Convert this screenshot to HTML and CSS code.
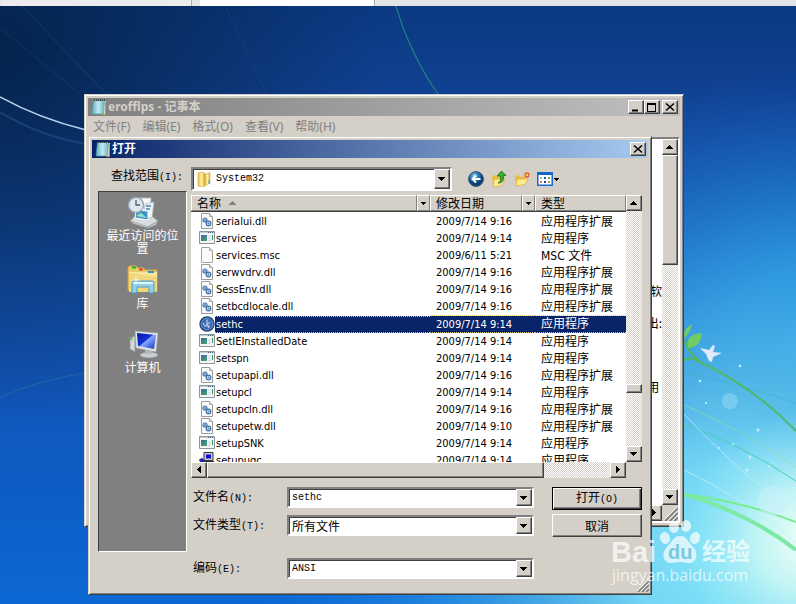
FILE: index.html
```html
<!DOCTYPE html>
<html lang="zh-CN">
<head>
<meta charset="utf-8">
<title>erofflps - 记事本</title>
<link rel="stylesheet" href="styles.css">
</head>
<body>
<svg class="sprites" aria-hidden="true">
  <defs>
    <linearGradient id="pageBlue" x1="0" x2="1"><stop offset="0" stop-color="#58aebe"/><stop offset=".5" stop-color="#c4ebf0"/><stop offset="1" stop-color="#69b7c7"/></linearGradient>
    <linearGradient id="folderY" x1="0" x2="1"><stop offset="0" stop-color="#e5bd48"/><stop offset=".5" stop-color="#fff0a5"/><stop offset="1" stop-color="#d9ac35"/></linearGradient>
    <radialGradient id="ball" cx=".4" cy=".3"><stop offset="0" stop-color="#a8d8ef"/><stop offset=".5" stop-color="#2d7fb8"/><stop offset="1" stop-color="#123f78"/></radialGradient>
    <linearGradient id="screen" x1="0" y1="0" x2="1" y2="1"><stop offset="0" stop-color="#0818a8"/><stop offset=".45" stop-color="#1032d8"/><stop offset=".5" stop-color="#88a8ff"/><stop offset="1" stop-color="#1030c0"/></linearGradient>
    <linearGradient id="exeG" x1="0" y1="0" x2="1" y2="1"><stop offset="0" stop-color="#3c62a8"/><stop offset="1" stop-color="#48a868"/></linearGradient>
  </defs>
  <symbol id="i-note" viewBox="0 0 16 16"><path d="M3 2h12l-1 14H13z" fill="#f5eed8"/><path d="M2.500 1.500h11L12.500 15H1z" fill="url(#pageBlue)" stroke="#4b98aa" stroke-width=".6"/><path d="M3 1.200h11" stroke="#263a42" stroke-width="1.600" stroke-dasharray="1 1"/><path d="M14.300 3v12.500H11" stroke="#b79b52" fill="none"/></symbol>
  <symbol id="i-dll" viewBox="0 0 16 16"><path d="M2.500.5h8l3 3v12h-11z" fill="#fbfbfb" stroke="#9a9a9a"/><path d="M10.500.5v3h3" fill="#ddd" stroke="#9a9a9a" stroke-width=".8"/><g fill="#e6f0fa" stroke="#3a6ea5"><circle cx="6" cy="7" r="2" stroke-width="1.100"/><circle cx="9.500" cy="10.500" r="2.300" stroke-width="1.200"/><circle cx="6" cy="7" r=".5"/><circle cx="9.500" cy="10.500" r=".6"/></g></symbol>
  <symbol id="i-exe" viewBox="0 0 16 16"><path d="M.5 1.500h15v12H.5z" fill="#f4f6f8" stroke="#8c949c"/><path d="M1 2.500h14" stroke="#c3ccd6"/><path d="M9 2.500h5" stroke="#4a6484" stroke-dasharray="1 1"/><path d="M2 5h6v6H2z" fill="url(#exeG)"/><path d="M9.500 6.500h2M9.500 8.500h2M9.500 10.500h2" stroke="#b8c0c8" stroke-width=".8"/><path d="M13.500 5v5" stroke="#2c9a78"/></symbol>
  <symbol id="i-file" viewBox="0 0 16 16"><path d="M2.500.5h8l3 3v12h-11z" fill="#fafafa" stroke="#a2a2a2"/><path d="M10.500.5v3h3" fill="#ddd" stroke="#a2a2a2" stroke-width=".8"/></symbol>
  <symbol id="i-sethc" viewBox="0 0 16 16"><circle cx="8" cy="8" r="7.700" fill="#1d3f7c"/><circle cx="8" cy="8" r="6" fill="#3f6bb0" stroke="#7e9bcc" stroke-width=".8"/><path d="M8 3.500V8l3-1.500M4 7l2 3h5M8 8l2 4" stroke="#c2d4f0" fill="none" stroke-width="1.100"/></symbol>
  <symbol id="i-setup" viewBox="0 0 16 16"><path d="M5 .5h9v8H5z" fill="#ccc" stroke="#333"/><path d="M7 2.500h5v4H7z" fill="#0a0adf"/><path d="M3 9.500h12v5H3z" fill="#bbb" stroke="#333"/><path d="M0 8l3-2 3 3-3 3z" fill="#2222c0" stroke="#333" stroke-width=".5"/></symbol>
  <symbol id="i-folder" viewBox="0 0 16 16"><path d="M1 2l5-1 2 2v12l-5 1-2-1z" fill="url(#folderY)" stroke="#c89c36" stroke-width=".5"/><path d="M8 3l5-1.500V12l-4 2.500-1-.5z" fill="url(#folderY)" stroke="#c89c36" stroke-width=".5"/><path d="M11.500 9.500h1.500V13h-1.500z" fill="#55a6dd"/></symbol>
  <symbol id="i-back" viewBox="0 0 16 16"><circle cx="8" cy="8" r="7.500" fill="url(#ball)" stroke="#34506c" stroke-width=".8"/><path d="M12.500 8H5M8 4.500L4.500 8 8 11.500" stroke="#fff" stroke-width="1.900" fill="none"/></symbol>
  <symbol id="i-up" viewBox="0 0 16 16"><path d="M1 5l4-1 1 1.500h5V14l-9 2z" fill="#e9bf45"/><path d="M3 8h11l-3 6.500-9 1.500z" fill="#ffe98e" stroke="#cc9c2d" stroke-width=".5"/><path d="M7 12c3-1 3-4 2-7H6l4.500-5L15 4.500h-2.500C13 9 12 12 7 12z" fill="#36ae2c" stroke="#17721b" stroke-width=".8"/></symbol>
  <symbol id="i-new" viewBox="0 0 16 16"><path d="M1 5l4-1 1 1.500h5V13l-9 2z" fill="#e9bf45"/><path d="M3 8h11l-3 5.500-9 1.500z" fill="#ffe98e" stroke="#cc9c2d" stroke-width=".5"/><path d="M13 1v6M10 4h6M11 2l4 4M15 2l-4 4" stroke="#ea4b22" stroke-width="1.200"/><circle cx="13" cy="4" r="1.300" fill="#ffd24a"/></symbol>
  <symbol id="i-view" viewBox="0 0 16 16"><path d="M.8 1.800h14.400v12.500H.8z" fill="#fff" stroke="#1767c9" stroke-width="1.500"/><path d="M0 1h16v3H0z" fill="#1767c9"/><path d="M3 6h2v2H3z" fill="#a8b4cc"/><path d="M7 6h2v2H7z" fill="#3060a0"/><path d="M11 6h2v2h-2z" fill="#58b058"/><path d="M3 10h2v2H3z" fill="#e86a4a"/><path d="M7 10h2v2H7z" fill="#2040a0"/><path d="M11 10h2v2h-2z" fill="#c09a20"/></symbol>
  <symbol id="a-down" viewBox="0 0 8 8"><path d="M0 2h7v1H0zM1 3h5v1H1zM2 4h3v1H2zM3 5h1v1H3z"/></symbol>
  <symbol id="a-up" viewBox="0 0 8 8"><path d="M3 2h1v1H3zM2 3h3v1H2zM1 4h5v1H1zM0 5h7v1H0z"/></symbol>
  <symbol id="a-small" viewBox="0 0 8 8"><path d="M1 3h5v1H1zM2 4h3v1H2zM3 5h1v1H3z"/></symbol>
  <symbol id="a-left" viewBox="0 0 8 8"><path d="M2 3h1v1H2zM3 2h1v3H3zM4 1h1v5H4zM5 0h1v7H5z"/></symbol>
  <symbol id="a-right" viewBox="0 0 8 8"><path d="M5 3h1v1H5zM4 2h1v3H4zM3 1h1v5H3zM2 0h1v7H2z"/></symbol>
  <symbol id="a-close" viewBox="0 0 10 8"><path d="M1 0l8 7M9 0L1 7" stroke="#000" stroke-width="1.500"/></symbol>
  <symbol id="a-min" viewBox="0 0 10 8"><path d="M1 6h6v2H1z"/></symbol>
  <symbol id="a-max" viewBox="0 0 10 9"><path d="M0 0h9v9H0zM1 2v6h7V2z" fill-rule="evenodd"/></symbol>
  <symbol id="a-grip" viewBox="0 0 12 12"><path d="M1 12L12 1M5 12l7-7M9 12l3-3" stroke="#808080" stroke-width="1.600"/><path d="M0 11L11 0M4 11l8-8M8 11l4-4" stroke="#fff" stroke-width=".8"/></symbol>
</svg>

<svg class="wallpaper" viewBox="0 0 796 604" preserveAspectRatio="none" aria-hidden="true">
  <defs>
    <linearGradient id="sky" x1="0" y1="0" x2="0" y2="1"><stop offset="0" stop-color="#0a3880"/><stop offset=".2" stop-color="#134396"/><stop offset=".45" stop-color="#1550ae"/><stop offset=".8" stop-color="#0e5cc4"/><stop offset="1" stop-color="#0c68d4"/></linearGradient>
    <radialGradient id="dark" gradientUnits="userSpaceOnUse" cx="0" cy="50" r="380"><stop offset="0" stop-color="#04244c"/><stop offset="1" stop-color="#04244c" stop-opacity="0"/></radialGradient>
    <radialGradient id="azure" gradientUnits="userSpaceOnUse" cx="840" cy="390" r="330"><stop offset="0" stop-color="#3cb8e6"/><stop offset=".4" stop-color="#2698dc" stop-opacity=".8"/><stop offset="1" stop-color="#0a50b8" stop-opacity="0"/></radialGradient>
    <radialGradient id="cyan" gradientUnits="userSpaceOnUse" cx="730" cy="560" r="480"><stop offset="0" stop-color="#82e4f8"/><stop offset=".2" stop-color="#74d6f4"/><stop offset=".38" stop-color="#58bcea" stop-opacity=".8"/><stop offset=".6" stop-color="#3ca8ec" stop-opacity=".5"/><stop offset="1" stop-color="#1478dc" stop-opacity="0"/></radialGradient>
    <radialGradient id="glow" gradientUnits="userSpaceOnUse" cx="810" cy="540" r="130"><stop offset="0" stop-color="#f4fff8"/><stop offset=".4" stop-color="#d4fbf4" stop-opacity=".8"/><stop offset="1" stop-color="#a0ecf8" stop-opacity="0"/></radialGradient>
  </defs>
  <path fill="url(#sky)" d="M0 0h796v604H0z"/>
  <path fill="url(#dark)" d="M0 0h796v604H0z"/>
  <path fill="url(#azure)" d="M0 0h796v604H0z"/>
  <path fill="url(#cyan)" d="M0 0h796v604H0z"/>
  <path fill="url(#glow)" d="M0 0h796v604H0z"/>
  <g fill="none">
    <path d="M0 97q40 22 86 33" stroke="#b9d2ee" stroke-width="1.500"/>
    <path d="M0 112q40 24 86 32" stroke="#2a5798" stroke-width="2" opacity=".5"/>
    <path d="M22 6l84 88" stroke="#1c5060" opacity=".6"/>
    <path d="M0 28l80 66M225 6l42 88" stroke="#2a5a98" opacity=".3"/>
    <path d="M396 6q14 48 42 88" stroke="#1f8080" stroke-width="1.200"/>
    <path d="M0 397q42-18 86-24" stroke="#287098" opacity=".7"/>
    <path d="M684 373q60 12 112 30" stroke="#38b0c0" opacity=".6"/>
    <path d="M684 405q60 26 112 62" stroke="#9adca0" opacity=".6"/>
    <path d="M684 424q60 22 112 57" stroke="#4ad0b4"/>
    <path d="M684 414q60 64 112 98M684 470q60 28 112 72" stroke="#c4eefa" opacity=".7"/>
    <path d="M684 494q60 8 112 28" stroke="#7aee8c" stroke-width="2"/>
    <path d="M684 494q66 20 112 56" stroke="#7ee8a6" stroke-width="4"/>
    <path d="M684 340q4 12 16 22M684 360q9-4 14 2" stroke="#53b651" stroke-width="2"/>
    <path d="M698 361q56 26 98 70" stroke="#4fb96c" stroke-width="2"/>
  </g>
  <path d="M688 348q-3-14 14-15-1 14-14 15zM684 334q1-6 8-10-2 10-8 14z" fill="#70cc62"/>
  <path d="M700 348l9 2 4-5 2 1-2 6 9 1-9 4-1 5-3-1-3-7z" fill="#e4e9fb"/>
  <g fill="#c8f0fc">
    <circle cx="773" cy="501" r="15" opacity=".55"/><circle cx="730" cy="401" r="8" opacity=".3"/><circle cx="700" cy="381" r="1.300"/><circle cx="740" cy="366" r="1.300"/><circle cx="758" cy="430" r="1.500"/><circle cx="750" cy="457" r="1.500"/><circle cx="747" cy="470" r="1.500"/><circle cx="706" cy="403" r="1"/><circle cx="719" cy="448" r="1"/><circle cx="733" cy="444" r="1"/><circle cx="769" cy="466" r="1"/>
  </g>
</svg>

<div class="tabstrip"><span class="tab"></span><span class="tab tab-active"></span></div>

<section class="window notepad" aria-label="记事本">
  <header class="titlebar inactive">
    <svg class="ico"><use href="#i-note"/></svg>
    <h1>erofflps - 记事本</h1>
    <button class="cap" aria-label="最小化"><svg><use href="#a-min"/></svg></button>
    <button class="cap" aria-label="最大化"><svg><use href="#a-max"/></svg></button>
    <button class="cap cap-close" aria-label="关闭"><svg><use href="#a-close"/></svg></button>
  </header>
  <nav class="menu"><button>文件(F)</button><button>编辑(E)</button><button>格式(O)</button><button>查看(V)</button><button>帮助(H)</button></nav>
  <div class="editor">
    <textarea aria-label="文本" readonly>









软

出:



用&#160;</textarea>
    <div class="vbar"><button class="sb" aria-label="向上"><svg><use href="#a-up"/></svg></button><i class="thumb"></i><button class="sb end" aria-label="向下"><svg><use href="#a-down"/></svg></button></div>
    <div class="hbar"><button class="sb end" aria-label="向右"><svg><use href="#a-right"/></svg></button></div>
    <svg class="grip"><use href="#a-grip"/></svg>
  </div>
</section>

<section class="window dialog" aria-label="打开">
  <header class="titlebar">
    <svg class="ico"><use href="#i-note"/></svg>
    <h2>打开</h2>
    <button class="cap cap-close" aria-label="关闭"><svg><use href="#a-close"/></svg></button>
  </header>
  <div class="lookin">
    <label for="look">查找范围<span class="lat">(I):</span></label>
    <div class="combo tall"><svg class="ico"><use href="#i-folder"/></svg><select id="look" class="lat"><option>System32</option></select><span class="sb drop"><svg><use href="#a-down"/></svg></span></div>
    <div class="tools">
      <button aria-label="后退"><svg class="ico"><use href="#i-back"/></svg></button>
      <button aria-label="向上一级"><svg class="ico"><use href="#i-up"/></svg></button>
      <button aria-label="新建文件夹"><svg class="ico"><use href="#i-new"/></svg></button>
      <button aria-label="查看"><svg class="ico"><use href="#i-view"/></svg><svg class="arr"><use href="#a-small"/></svg></button>
    </div>
  </div>
  <div class="content">
    <nav class="places">
      <a href="#recent"><svg viewBox="0 0 32 32"><path d="M3 25l5-5h17l6 5-10 6z" fill="#d8dcde" stroke="#8d9396"/><path d="M11 2h13l-1 19H11z" fill="#f6f8fa" stroke="#bbb"/><path d="M18 8l9-2-2 16-9-1z" fill="#eef2f6" stroke="#b5b5b5" stroke-width=".7"/><path d="M19 10h5M19 13h4" stroke="#3a8ac0" stroke-width="1.500"/><path d="M9 14l12 1v9l-13-2z" fill="#3a94cc" stroke="#fff"/><path d="M9 20l5-3 6 5z" fill="#9fe0c0"/><circle cx="9" cy="9" r="7.500" fill="#dde8f0" stroke="#9aa9b4" stroke-width="1.500"/><path d="M9 4v5h4" stroke="#48607a" stroke-width="1.300" fill="none"/><path d="M3 25l9 2 9 4 10-6-2 4-8 3-14-4z" fill="#b9bec0"/></svg><span>最近访问的位置</span></a>
      <a href="#lib"><svg viewBox="0 0 32 32"><path d="M1 4q0-2 2-2h6l2 2h6l1 2h12v20H1z" fill="#e6c968" stroke="#c9a443"/><path d="M2 8h28v20H2z" fill="#fbe596"/><path d="M2 9l28 4v15H2z" fill="#f2d678"/><path d="M5 2.500h4v2H5z" fill="#16b628"/><path d="M12 4.500h4v2h-4z" fill="#e0402c"/><path d="M21 7h6v2h-6z" fill="#3190d4"/><path d="M5 29V19q0-2 2-2h18q2 0 2 2v10h-5v-6H10v6z" fill="#8fd0ea" stroke="#4a9cc4"/><path d="M6 19h20" stroke="#dff6ff" stroke-width="2"/><path d="M9 12v8M5 16h8" stroke="#fff" stroke-width=".8"/></svg><span>库</span></a>
      <a href="#computer"><svg viewBox="0 0 32 32"><path d="M3 10l5-2v16l-5-3z" fill="#d4d8dc" stroke="#8b9096" stroke-width=".7"/><circle cx="4.500" cy="11" r="1.200" fill="#3fdc24"/><ellipse cx="22" cy="27" rx="9" ry="3" fill="#c9cdd0" stroke="#8f9498" stroke-width=".7"/><path d="M18 21h7v5h-7z" fill="#b4b9bd"/><path d="M8 3l23 2-2 19L9 20z" fill="#dfe3e6" stroke="#9a9fa4" stroke-width=".6"/><path d="M10 5l19 2-2 14-16-3z" fill="url(#screen)"/></svg><span>计算机</span></a>
    </nav>
    <main>
      <div class="list">
        <div class="rows">
          <table>
            <colgroup><col class="c-name"><col class="c-date"><col class="c-type"></colgroup>
            <thead><tr>
              <th><div class="th"><span>名称<svg class="arr sort"><use href="#a-up"/></svg></span><button aria-label="筛选名称"><svg class="arr"><use href="#a-small"/></svg></button></div></th>
              <th><div class="th"><span>修改日期</span><button aria-label="筛选日期"><svg class="arr"><use href="#a-small"/></svg></button></div></th>
              <th><div class="th"><span>类型</span></div></th>
            </tr></thead>
            <tbody>
              <tr><td><div class="nm"><svg class="ico"><use href="#i-dll"/></svg><span>serialui.dll</span></div></td><td>2009/7/14 9:16</td><td>应用程序扩展</td></tr>
              <tr><td><div class="nm"><svg class="ico"><use href="#i-exe"/></svg><span>services</span></div></td><td>2009/7/14 9:14</td><td>应用程序</td></tr>
              <tr><td><div class="nm"><svg class="ico"><use href="#i-file"/></svg><span>services.msc</span></div></td><td>2009/6/11 5:21</td><td>MSC 文件</td></tr>
              <tr><td><div class="nm"><svg class="ico"><use href="#i-dll"/></svg><span>serwvdrv.dll</span></div></td><td>2009/7/14 9:16</td><td>应用程序扩展</td></tr>
              <tr><td><div class="nm"><svg class="ico"><use href="#i-dll"/></svg><span>SessEnv.dll</span></div></td><td>2009/7/14 9:16</td><td>应用程序扩展</td></tr>
              <tr><td><div class="nm"><svg class="ico"><use href="#i-dll"/></svg><span>setbcdlocale.dll</span></div></td><td>2009/7/14 9:16</td><td>应用程序扩展</td></tr>
              <tr class="sel"><td><div class="nm"><svg class="ico"><use href="#i-sethc"/></svg><span>sethc</span></div></td><td>2009/7/14 9:14</td><td>应用程序</td></tr>
              <tr><td><div class="nm"><svg class="ico"><use href="#i-exe"/></svg><span>SetIEInstalledDate</span></div></td><td>2009/7/14 9:14</td><td>应用程序</td></tr>
              <tr><td><div class="nm"><svg class="ico"><use href="#i-exe"/></svg><span>setspn</span></div></td><td>2009/7/14 9:14</td><td>应用程序</td></tr>
              <tr><td><div class="nm"><svg class="ico"><use href="#i-dll"/></svg><span>setupapi.dll</span></div></td><td>2009/7/14 9:16</td><td>应用程序扩展</td></tr>
              <tr><td><div class="nm"><svg class="ico"><use href="#i-exe"/></svg><span>setupcl</span></div></td><td>2009/7/14 9:14</td><td>应用程序</td></tr>
              <tr><td><div class="nm"><svg class="ico"><use href="#i-dll"/></svg><span>setupcln.dll</span></div></td><td>2009/7/14 9:16</td><td>应用程序扩展</td></tr>
              <tr><td><div class="nm"><svg class="ico"><use href="#i-dll"/></svg><span>setupetw.dll</span></div></td><td>2009/7/14 9:10</td><td>应用程序扩展</td></tr>
              <tr><td><div class="nm"><svg class="ico"><use href="#i-exe"/></svg><span>setupSNK</span></div></td><td>2009/7/14 9:14</td><td>应用程序</td></tr>
              <tr><td><div class="nm"><svg class="ico"><use href="#i-setup"/></svg><span>setupugc</span></div></td><td>2009/7/14 9:14</td><td>应用程序</td></tr>
            </tbody>
          </table>
        </div>
        <div class="vbar"><button class="sb" aria-label="向上"><svg><use href="#a-up"/></svg></button><i class="thumb"></i><button class="sb end" aria-label="向下"><svg><use href="#a-down"/></svg></button></div>
        <div class="hbar"><button class="sb" aria-label="向左"><svg><use href="#a-left"/></svg></button><i class="thumb"></i><button class="sb end" aria-label="向右"><svg><use href="#a-right"/></svg></button></div>
      </div>
      <form class="form">
        <div class="fields">
          <label for="fname">文件名<span class="lat">(N):</span></label>
          <div class="combo"><input id="fname" class="lat" value="sethc"><button type="button" class="sb drop" aria-label="展开"><svg><use href="#a-down"/></svg></button></div>
          <label for="ftype">文件类型<span class="lat">(T):</span></label>
          <div class="combo"><select id="ftype"><option>所有文件</option></select><span class="sb drop"><svg><use href="#a-down"/></svg></span></div>
          <label for="enc" class="apart">编码<span class="lat">(E):</span></label>
          <div class="combo apart"><select id="enc" class="lat"><option>ANSI</option></select><span class="sb drop"><svg><use href="#a-down"/></svg></span></div>
        </div>
        <div class="actions">
          <button type="button" class="btn default">打开<span class="lat">(O)</span></button>
          <button type="button" class="btn">取消</button>
        </div>
      </form>
    </main>
  </div>
  <svg class="grip"><use href="#a-grip"/></svg>
</section>

<svg class="watermark" viewBox="0 0 150 72" role="img" aria-label="Baidu 经验">
  <g class="wm">
    <text x="1" y="44" class="wm-b">Bai</text>
    <ellipse cx="55" cy="20" rx="5" ry="6" transform="rotate(-15 55 20)"/><ellipse cx="64" cy="9" rx="5" ry="6"/><ellipse cx="76" cy="8" rx="5" ry="6"/><ellipse cx="85" cy="20" rx="5" ry="6" transform="rotate(20 85 20)"/>
    <path d="M70 18c7 0 8 6 13 11 6 6 4 16-4 16-4 0-6-1-9-1s-5 1-9 1c-8 0-10-10-4-16 5-5 6-11 13-11z"/>
    <text x="92" y="42" class="wm-c">经验</text>
    <text x="2" y="63" class="wm-u">jingyan.baidu.com</text>
  </g>
  <text x="58" y="41" class="wm-d">du</text>
</svg>
</body>
</html>
```

FILE: styles.css
```css
:root {
  --face: #d4d0c8;
  --dark: #404040;
  --mid: #808080;
  --navy: #0a246a;
  --ui: "DejaVu Sans Condensed", "Noto Sans CJK SC", sans-serif;
}
* { box-sizing: border-box; }
body {
  margin: 0;
  min-height: 100vh;
  position: relative;
  overflow: hidden;
  font: 12px/16px "Noto Sans CJK SC", sans-serif;
  color: #000;
}
button, input, select, textarea { font: inherit; color: inherit; margin: 0; padding: 0; border: 0; background: none; border-radius: 0; outline: 0; }
h1, h2 { margin: 0; font-size: 12px; }
svg { display: block; flex: none; }
.sprites { position: absolute; width: 0; height: 0; }
.wallpaper { position: absolute; inset: 0; width: 100%; height: 100%; }
.ico { width: 16px; height: 16px; }
.arr { width: 8px; height: 8px; }
.lat { font-family: "Liberation Mono", monospace; font-size: 10px; }

.tabstrip { position: relative; display: flex; gap: 8px; height: 6px; padding-left: 1px; background: #e3e4e6; }
.tab { width: 24%; background: #ececee; border-right: 1px solid #aaa; }
.tab-active { width: 22%; background: #fff; }

/* windows */
.window {
  position: absolute;
  background: var(--face);
  border: 1px solid;
  border-color: var(--face) var(--dark) var(--dark) var(--face);
  box-shadow: inset 1px 1px #fff, inset -1px -1px var(--mid);
  padding: 3px;
}
.notepad { left: 84px; right: 112px; top: 94px; }
.dialog { left: 88px; right: 144px; top: 136px; padding-bottom: 15px; }
.titlebar { display: flex; align-items: center; height: 18px; padding: 0 2px 0 3px; color: #fff; background: linear-gradient(90deg, var(--navy), #a6caf0); }
.titlebar.inactive { color: var(--face); background: linear-gradient(90deg, #808080, #c0c0c0); }
.titlebar h1, .titlebar h2 { flex: 1; padding-left: 1px; font-family: "Noto Sans", "Noto Sans CJK SC", sans-serif; font-weight: bold; line-height: 18px; }
.cap, .sb, .thumb, .btn {
  background: var(--face);
  border: 1px solid;
  border-color: #fff var(--dark) var(--dark) #fff;
  box-shadow: inset -1px -1px var(--mid);
}
.cap { display: flex; justify-content: center; align-items: center; width: 16px; height: 14px; }
.cap svg { width: 10px; height: 9px; }
.cap-close { margin-left: 2px; }
.menu { display: flex; gap: 12px; height: 21px; padding: 0 5px; color: var(--mid); }
.menu button { font-family: "Noto Sans", "Noto Sans CJK SC", sans-serif; font-size: 12px; white-space: nowrap; }

/* scroll bars */
.vbar, .hbar { display: flex; background: repeating-conic-gradient(#fff 0 25%, var(--face) 0 50%) 0 0 / 2px 2px; }
.vbar { flex-direction: column; }
.sb { display: flex; align-items: center; justify-content: center; flex: none; width: 16px; height: 16px; }
.sb svg { width: 8px; height: 8px; }
.end { margin: auto 0 0 auto; }

.editor { display: grid; grid-template: 366px 16px / 1fr 16px; background: #fff; border: 2px solid; border-color: var(--mid) #fff #fff var(--mid); }
.editor textarea { resize: none; overflow: hidden; text-align: right; font: 12px/16px "Noto Sans CJK SC", sans-serif; }
.editor .thumb { height: 110px; }
.editor .grip { background: var(--face); width: 16px; height: 16px; padding: 2px 0 0 2px; }

/* look-in row */
.lookin { display: flex; padding: 9px 87px 0 19px; }
.lookin label { width: 80px; white-space: nowrap; }
.combo { display: flex; align-items: center; height: 21px; padding: 0 0 0 3px; background: #fff; border: 2px solid; border-color: var(--mid) #fff #fff var(--mid); box-shadow: inset 1px 1px var(--dark); }
.combo.tall { flex: 1; height: 24px; padding-left: 4px; }
.combo input, .combo select { flex: 1; min-width: 0; height: 100%; appearance: none; }
.combo .ico + select { padding-left: 3px; }
.combo .drop { height: 100%; margin-top: 0; pointer-events: none; }
.tools { display: flex; align-items: center; gap: 7px; padding-left: 16px; }
.tools button { display: flex; align-items: center; }

.content { display: flex; gap: 4px; padding: 0 6px; }
.places { display: flex; flex-direction: column; gap: 10px; width: 89px; height: 361px; flex: none; padding: 4px 6px; background: var(--mid); border: 1px solid; border-color: var(--dark) #fff #fff var(--dark); }
.places a { display: flex; flex-direction: column; align-items: center; min-height: 54px; color: #fff; text-align: center; text-decoration: none; line-height: 13px; }
.places svg { width: 32px; height: 32px; }

main { flex: 1; min-width: 0; padding-top: 4px; }
.list { display: grid; grid-template: 267px 16px / 1fr 16px; }
.rows { overflow: hidden; background: #fff; }
table { width: 100%; table-layout: fixed; border-collapse: collapse; font-family: var(--ui); font-size: 11px; }
.c-name { width: 239px; }
.c-date { width: 105px; }
th, td { padding: 0; text-align: left; font-weight: normal; white-space: nowrap; }
.th { display: flex; height: 17px; margin-bottom: 1px; background: var(--face); font: 12px/16px "Noto Sans CJK SC", sans-serif; border-bottom: 1px solid var(--dark); }
.th span { flex: 1; display: flex; align-items: center; gap: 8px; padding-left: 5px; border: 1px solid; border-color: #fff var(--mid) var(--mid) #fff; }
.th button { display: flex; align-items: center; justify-content: center; width: 13px; border: 1px solid; border-color: #fff var(--mid) var(--mid) #fff; }
.sort { fill: var(--mid); }
td { height: 17px; line-height: 17px; }
td + td { padding-left: 6px; }
td:last-child { font-size: 12px; line-height: 16px; }
.nm { display: flex; height: 17px; padding-left: 8px; }
.nm span { flex: 1; padding-left: 1px; }
.sel { color: #fff; }
.sel .nm span, .sel td + td { background: var(--navy); border: 1px dotted #d8c868; border-width: 1px 0; line-height: 15px; }
.list .vbar .thumb { height: 9px; margin-top: 173px; }
.list .hbar .thumb { width: 337px; }

/* bottom form */
.form { display: flex; gap: 18px; padding-top: 9px; }
.fields { flex: 1; display: grid; grid-template-columns: 96px 1fr; row-gap: 7px; align-items: center; }
.fields label { padding-left: 2px; }
.apart { margin-top: 15px; }
.actions { display: flex; flex-direction: column; gap: 4px; width: 90px; }
.btn { height: 23px; }
.btn.default { outline: 1px solid #000; outline-offset: -1px; border-color: #000; box-shadow: inset 1px 1px #fff, inset -1px -1px var(--dark), inset -2px -2px var(--mid); }
.grip { width: 12px; height: 12px; }
.dialog > .grip { position: absolute; right: 2px; bottom: 2px; }

.watermark { position: absolute; right: 36px; bottom: 14px; width: 150px; height: 72px; overflow: visible; pointer-events: none; }
.wm { fill: #fff; opacity: .7; font-family: "Liberation Sans", "Noto Sans CJK SC", sans-serif; }
.wm-b { font-size: 29px; font-weight: bold; }
.wm-c { font-family: "Noto Sans CJK SC", sans-serif; font-size: 24px; font-weight: bold; }
.wm-u { font-family: "Open Sans", sans-serif; font-size: 16px; }
.wm-d { fill: #79c9de; font: bold 20px "Liberation Sans", sans-serif; }
```
